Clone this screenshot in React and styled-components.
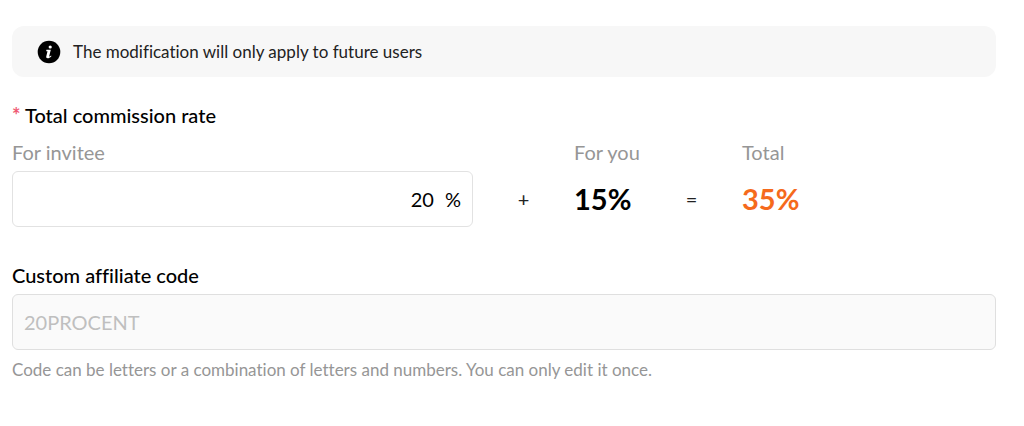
import { useState } from "react";
import styled, { createGlobalStyle } from "styled-components";

const App = () => {
  const [rate, setRate] = useState("20");

  return (
    <>
      <GlobalStyle />
      <Form>
        <Notice>
          <InfoIcon />
          <p>The modification will only apply to future users</p>
        </Notice>

        <Title>
          <Required>*</Required> Total commission rate
        </Title>
        <Rates>
          <Label htmlFor="invitee">For invitee</Label>
          <span />
          <Label as="span">For you</Label>
          <span />
          <Label as="span">Total</Label>

          <RateField>
            <input
              id="invitee"
              value={rate}
              onChange={(e) => setRate(e.target.value)}
            />
            <span>%</span>
          </RateField>
          <Operator>+</Operator>
          <Amount>15%</Amount>
          <Operator>=</Operator>
          <Amount $color="#f56a1c">35%</Amount>
        </Rates>

        <Title>
          <label htmlFor="code">Custom affiliate code</label>
        </Title>
        <CodeInput id="code" value="20PROCENT" disabled />
        <Hint>
          Code can be letters or a combination of letters and numbers. You can
          only edit it once.
        </Hint>
      </Form>
    </>
  );
};

const InfoIcon = () => (
  <svg width="24" height="24" viewBox="0 0 24 24" aria-hidden="true">
    <circle cx="12" cy="12" r="11.3" fill="#000" />
    <circle cx="13.2" cy="7" r="1.6" fill="#fff" />
    <path
      d="M9.4 9.8h4.4l-1.6 6.4c-.1.5.3.5 1.9-.7l.3.7c-1.5 1.5-2.6 2-3.7 2-1.3 0-1.7-.8-1.4-2l1.2-5H9.2z"
      fill="#fff"
    />
  </svg>
);

const GlobalStyle = createGlobalStyle`
  * {
    box-sizing: border-box;
  }

  body {
    margin: 0;
    background-color: #fff;
    color: #000;
    font-family: Lato, "Noto Sans", sans-serif;
    font-size: 20px;
    font-variant-ligatures: none;
    line-height: 28px;
  }

  input {
    font: inherit;
    color: inherit;
  }

  p, h2 {
    margin: 0;
  }
`;

const Form = styled.form`
  padding: 26px 28px 0 12px;
`;

const Notice = styled.div`
  display: flex;
  align-items: center;
  gap: 12px;
  min-height: 51px;
  margin-bottom: 24px;
  padding: 0 25px;
  border-radius: 12px;
  background-color: #f7f7f7;
  color: #222;
  font-size: 17px;
`;

const Title = styled.h2`
  font-size: 20px;
  font-weight: 500;
  line-height: 28px;
`;

const Required = styled.span`
  color: #ef5b74;
  font-weight: 700;
`;

const Rates = styled.div`
  display: grid;
  grid-template-columns: 1fr 101px 67px 101px 254px;
  align-items: center;
  row-gap: 5px;
  margin: 9px 0 34px;
`;

const Label = styled.label`
  color: #969696;
`;

const RateField = styled.div`
  display: flex;
  align-items: center;
  gap: 11px;
  height: 56px;
  padding: 0 11px;
  border: 1px solid #e2e2e2;
  border-radius: 6px;

  input {
    flex: 1;
    min-width: 0;
    padding: 0;
    border: none;
    outline: none;
    background: none;
    text-align: right;
  }
`;

const Operator = styled.span`
  color: #222;
  text-align: center;
`;

const Amount = styled.strong`
  color: ${(props) => props.$color || "#000"};
  font-size: 29px;
  font-weight: 700;
`;

const CodeInput = styled.input`
  display: block;
  width: 100%;
  height: 56px;
  margin: 5px 0 6px;
  padding: 0 11px;
  border: 1px solid #dfdfdf;
  border-radius: 6px;
  background-color: #fafafa;

  &:disabled {
    color: #bfbfbf;
  }
`;

const Hint = styled.p`
  color: #969696;
  font-size: 17px;
`;

export default App;
